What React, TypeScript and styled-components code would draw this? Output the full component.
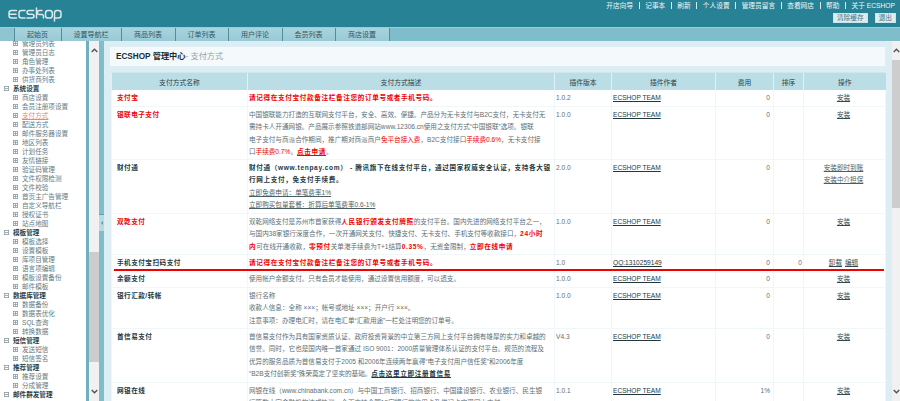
import { ReactNode } from "react";
import styled, { createGlobalStyle } from "styled-components";

const GlobalStyle = createGlobalStyle`
  html, body, #root {
    margin: 0;
    height: 100%;
    overflow: hidden;
  }
  body {
    font-family: "Liberation Sans", "Noto Sans CJK SC", sans-serif;
    font-size: 6.6px;
    color: #192e32;
  }
`;

const Page = styled.div`
  display: flex;
  flex-direction: column;
  height: 401px;
  overflow: hidden;
`;

const Header = styled.header`
  display: flex;
  justify-content: space-between;
  height: 27px;
  background: #278296;
  flex: none;
`;

const LogoWrap = styled.div`
  padding: 7px 0 0 8px;
`;

const HeaderRight = styled.div`
  display: flex;
  flex-direction: column;
  align-items: flex-end;
  padding: 0 4px 0 0;
`;

const TopNav = styled.nav`
  display: flex;
  align-items: center;
  height: 10px;
  margin-right: 1px;
  color: #eef8fa;
  font-size: 6.7px;
  white-space: nowrap;
`;

const TopLink = styled.span`
  & + &::before {
    content: "";
    display: inline-block;
    width: 1px;
    height: 7px;
    margin: 0 5.5px 0 5.6px;
    background: #d5e9ee;
    vertical-align: -1px;
  }
`;

const ButtonRow = styled.div`
  display: flex;
  gap: 7px;
  margin-top: 3px;
`;

const HeaderButton = styled.button`
  height: 10px;
  padding: 0 3px;
  border: 1px solid #cbe4ea;
  background: #dcecf1;
  color: #4a727c;
  font: 6.7px "Liberation Sans", "Noto Sans CJK SC", sans-serif;
  line-height: 8px;
`;

const TabBar = styled.div`
  display: flex;
  height: 14px;
  flex: none;
  background: #80bdcb;
  border-top: 1px solid #9bcbd6;
  box-sizing: border-box;
`;

const TabStub = styled.div`
  width: 15px;
  background: #8fc4d1;
  border-right: 1px solid #4f8f9d;
  box-sizing: border-box;
`;

const Tab = styled.div`
  padding: 0 12.5px 0 12px;
  background: linear-gradient(#a9d3dd, #98cad6);
  border-right: 1px solid #4f8f9d;
  color: #345660;
  font-size: 7px;
  line-height: 13px;
  white-space: nowrap;
`;

const Body = styled.div`
  display: flex;
  flex: 1;
  min-height: 0;
`;

const Sidebar = styled.aside`
  width: 86px;
  flex: none;
  overflow: hidden;
  background: #fff;
  border-right: 3px solid #6fb0bf;
`;

const MenuList = styled.ul`
  list-style: none;
  margin: -2.5px 0 0;
  padding: 0;
`;

const MenuRow = styled.li<{ $group?: boolean; $active?: boolean }>`
  display: flex;
  align-items: center;
  gap: 4px;
  height: 9px;
  padding-left: ${(p) => (p.$group ? "4px" : "13px")};
  font-size: 6.6px;
  white-space: nowrap;
  color: ${(p) => (p.$group ? "#2a4248" : p.$active ? "#f08a55" : "#5f7b83")};
  font-weight: ${(p) => (p.$group ? 700 : 400)};
  text-decoration: ${(p) => (p.$active ? "underline" : "none")};
`;

const ScrollTrack = styled.div<{ $width: number }>`
  display: flex;
  flex-direction: column;
  align-items: center;
  flex: none;
  width: ${(p) => p.$width}px;
  background: #f1f1f1;
`;

const ScrollButton = styled.div<{ $end?: boolean }>`
  display: flex;
  align-items: center;
  justify-content: center;
  flex: none;
  height: 19px;
  width: 100%;
  margin-top: ${(p) => (p.$end ? "auto" : "0")};
`;

const ScrollThumb = styled.div<{ $offset: number; $height: number }>`
  flex: none;
  width: 100%;
  margin-top: ${(p) => p.$offset}px;
  height: ${(p) => p.$height}px;
  background: #cdcdcd;
`;

const SplitBar = styled.div`
  flex: none;
  width: 5px;
  padding-top: 173px;
  background: #80bdcb;
`;

const SplitHandle = styled.div`
  display: flex;
  align-items: center;
  justify-content: center;
  height: 16px;
  background: #b8dae3;
  border-top: 1px solid #5ea2b2;

  &::before {
    content: "";
    border-style: solid;
    border-width: 2px 2px 2px 0;
    border-color: transparent #5a96a6 transparent transparent;
  }
`;

const Main = styled.main`
  flex: 1;
  min-width: 0;
  overflow: hidden;
  padding: 6px 7px 0 6px;
  background: #dcedf3;
`;

const TitleBox = styled.h1`
  margin: 0 0 6px;
  height: 19px;
  padding-left: 6px;
  background: #f4fafc;
  font-size: 8.2px;
  font-weight: 700;
  line-height: 19px;
  color: #192e32;
`;

const TitleSub = styled.span`
  font-weight: 400;
  color: #8fa4a9;
`;

const TableWrap = styled.div`
  margin-left: 1px;
  padding-top: 1px;
  background: #cfe6ec;
`;

const PayTable = styled.table`
  width: 774px;
  table-layout: fixed;
  border-collapse: collapse;
  background: #fff;
`;

const HeadCell = styled.th`
  height: 17px;
  padding: 0;
  background: #bbdde5;
  border-left: 1px solid #e2f1f5;
  color: #2b4248;
  font-size: 6.8px;
  font-weight: 400;
  text-align: center;
`;

const Row = styled.tr<{ $marked?: boolean; $height: number }>`
  position: relative;
  height: ${(p) => p.$height}px;

  ${(p) =>
    p.$marked &&
    `&::after {
      content: "";
      position: absolute;
      left: 2px;
      right: 2px;
      bottom: -1px;
      height: 2px;
      background: #f00000;
    }`}
`;

const Cell = styled.td<{ $align?: "left" | "right" | "center"; $padLeft?: number; $padRight?: number }>`
  padding: 2.3px ${(p) => p.$padRight ?? 3}px 0 ${(p) => p.$padLeft ?? 1}px;
  vertical-align: top;
  border: 1px solid #eff7f9;
  border-top: 0;
  line-height: 12.4px;
  white-space: nowrap;
  overflow: hidden;
  text-align: ${(p) => p.$align ?? "left"};
  color: #5c6f75;
`;

const MethodName = styled.span<{ $red?: boolean }>`
  font-weight: 700;
  letter-spacing: 0.5px;
  color: ${(p) => (p.$red ? "#f00000" : "#22383e")};
`;

const Red = styled.span`
  color: #f00000;
`;

const RedBold = styled.strong`
  letter-spacing: 0.65px;
  color: #f00000;
`;

const RedLink = styled(RedBold)`
  text-decoration: underline;
`;

const Strong = styled.strong`
  letter-spacing: 0.65px;
  color: #22383e;
`;

const Link = styled.span`
  color: #4a5f65;
  text-decoration: underline;
`;

const DarkLink = styled.span`
  color: #22383e;
  text-decoration: underline;
`;

const ActionLink = styled.span`
  color: #33494f;
  text-decoration: underline;
  & + & {
    margin-left: 3px;
  }
`;

function Logo() {
  return (
    <svg width="54" height="15" viewBox="0 0 54 15" fill="none" stroke="#dde8ea" strokeWidth="1.5" strokeLinecap="round" strokeLinejoin="round">
      <path d="M8.5 3.5H3.5Q1 3.5 1 6v2.5Q1 11 3.5 11h5M1.5 7.2h6.5" />
      <path d="M17 3.5h-3.5Q11 3.5 11 6v2.5q0 2.5 2.5 2.5H17" />
      <path d="M25.5 3.5H21q-2 0-2 1.8t2 1.9h3q2 0 2 1.9T24 11h-5" />
      <path d="M28.5 1v10M34 3.5h-2.5q-2 0-2 2v.5q0 1.4 1.6 1.4h3.4M31 7.4h3q1.5 0 1.5 1.8V11" />
      <rect x="37.5" y="3.5" width="6.8" height="7.5" rx="2.6" />
      <path d="M46.5 14V6q0-2.5 2.5-2.5h1.5q2.5 0 2.5 2.5v2.5q0 2.5-2.5 2.5h-4" />
    </svg>
  );
}

function TreeIcon({ open }: { open?: boolean }) {
  return (
    <svg width="5" height="5" viewBox="0 0 5 5" fill="none" stroke="#8a9ca1" strokeWidth="0.8" style={{ flex: "none" }}>
      <rect x="0.4" y="0.4" width="4.2" height="4.2" />
      <path d={open ? "M1 2.5h3" : "M1 2.5h3M2.5 1v3"} />
    </svg>
  );
}

function Chevron({ up }: { up?: boolean }) {
  return (
    <svg width="7" height="5" viewBox="0 0 7 5" fill="none" stroke="#505050" strokeWidth="1.3">
      <path d={up ? "M.7 4 3.5 1.2 6.3 4" : "M.7 1 3.5 3.8 6.3 1"} />
    </svg>
  );
}

const navItems = ["开店向导", "记事本", "刷新", "个人设置", "管理员留言", "查看网店", "帮助", "关于 ECSHOP"];
const tabs = ["起始页", "设置导航栏", "商品列表", "订单列表", "用户评论", "会员列表", "商店设置"];

const menu: { label: string; group?: boolean; active?: boolean }[] = [
  { label: "管理员列表" },
  { label: "管理员日志" },
  { label: "角色管理" },
  { label: "办事处列表" },
  { label: "供货商列表" },
  { label: "系统设置", group: true },
  { label: "商店设置" },
  { label: "会员注册项设置" },
  { label: "支付方式", active: true },
  { label: "配送方式" },
  { label: "邮件服务器设置" },
  { label: "地区列表" },
  { label: "计划任务" },
  { label: "友情链接" },
  { label: "验证码管理" },
  { label: "文件权限检测" },
  { label: "文件校验" },
  { label: "首页主广告管理" },
  { label: "自定义导航栏" },
  { label: "授权证书" },
  { label: "站点地图" },
  { label: "模板管理", group: true },
  { label: "模板选择" },
  { label: "设置模板" },
  { label: "库项目管理" },
  { label: "语言项编辑" },
  { label: "模板设置备份" },
  { label: "邮件模板" },
  { label: "数据库管理", group: true },
  { label: "数据备份" },
  { label: "数据表优化" },
  { label: "SQL查询" },
  { label: "转换数据" },
  { label: "短信管理", group: true },
  { label: "发送短信" },
  { label: "短信签名" },
  { label: "推荐管理", group: true },
  { label: "推荐设置" },
  { label: "分成管理" },
  { label: "邮件群发管理", group: true },
];

const columns: { title: string; width: number }[] = [
  { title: "支付方式名称", width: 136 },
  { title: "支付方式描述", width: 307 },
  { title: "插件版本", width: 57 },
  { title: "插件作者", width: 104 },
  { title: "费用", width: 58 },
  { title: "排序", width: 30 },
  { title: "操作", width: 82 },
];

const reminder = <RedBold>请记得在支付宝付款备注栏备注您的订单号或者手机号码。</RedBold>;

interface Payment {
  name: string;
  red?: boolean;
  desc: ReactNode;
  version: string;
  author: string;
  fee: string;
  order?: string;
  actions: string[];
  height: number;
  marked?: boolean;
}

const payments: Payment[] = [
  { name: "支付宝", red: true, desc: reminder, version: "1.0.2", author: "ECSHOP TEAM", fee: "0", actions: ["安装"], height: 16 },
  {
    name: "银联电子支付",
    red: true,
    desc: (
      <>
        中国银联能力打造的互联网支付平台，安全、高效、便捷。产品分为无卡支付与B2C支付，无卡支付无
        <br />
        需持卡人开通网银。产品展示参照铁道部网站www.12306.cn使用之支付方式“中国银联”选项。银联
        <br />
        电子支付与商派合作期间，推广期对商派商户<Red>免平台接入费</Red>，B2C支付接口<Red>手续费0.6%</Red>，无卡支付接
        <br />
        口<Red>手续费0.7%</Red>。<RedLink>点击申请</RedLink>。
      </>
    ),
    version: "1.0.0",
    author: "ECSHOP TEAM",
    fee: "0",
    actions: ["安装"],
    height: 53,
  },
  {
    name: "财付通",
    desc: (
      <>
        <Strong>
          财付通（www.tenpay.com） - 腾讯旗下在线支付平台，通过国家权威安全认证，支持各大银
          <br />
          行网上支付，免支付手续费。
        </Strong>
        <br />
        <Link>立即免费申请：单笔费率1%</Link>
        <br />
        <Link>立即购买包量套餐：折算后单笔费率0.6-1%</Link>
      </>
    ),
    version: "2.0.0",
    author: "ECSHOP TEAM",
    fee: "0",
    actions: ["安装即时到账", "安装中介担保"],
    height: 54,
  },
  {
    name: "双乾支付",
    red: true,
    desc: (
      <>
        双乾网络支付是苏州市首家获得<RedBold>人民银行颁发支付牌照</RedBold>的支付平台。国内先进的网络支付平台之一，
        <br />
        与国内38家银行深度合作，一次开通网关支付、快捷支付、无卡支付、手机支付等收款接口，<RedBold>24小时</RedBold>
        <br />
        <RedBold>内</RedBold>可在线开通收款，<RedBold>零预付</RedBold>关单港手续费为T+1结算<RedBold>0.35%</RedBold>，无资金限制，<RedBold>立即在线申请</RedBold>
      </>
    ),
    version: "1.0.0",
    author: "ECSHOP TEAM",
    fee: "0",
    actions: ["安装"],
    height: 41,
  },
  {
    name: "手机支付宝扫码支付",
    desc: reminder,
    version: "1.0",
    author: "QQ:1310259149",
    fee: "0",
    order: "0",
    actions: ["卸载", "编辑"],
    height: 16,
    marked: true,
  },
  {
    name: "余额支付",
    desc: "使用帐户余额支付。只有会员才能使用，通过设置信用额度，可以透支。",
    version: "1.0.0",
    author: "ECSHOP TEAM",
    fee: "0",
    actions: ["安装"],
    height: 17,
  },
  {
    name: "银行汇款/转帐",
    desc: (
      <>
        银行名称
        <br />
        收款人信息：全称 ×××；帐号或地址 ×××；开户行 ×××。
        <br />
        注意事项：办理电汇时，请在电汇单“汇款用途”一栏处注明您的订单号。
      </>
    ),
    version: "1.0.0",
    author: "ECSHOP TEAM",
    fee: "0",
    actions: ["安装"],
    height: 41,
  },
  {
    name: "首信易支付",
    desc: (
      <>
        首信易支付作为具有国家资质认证、政府投资背景的中立第三方网上支付平台拥有雄厚的实力和卓越的
        <br />
        信誉。同时，它也是国内唯一首家通过 ISO 9001：2000质量管理体系认证的支付平台。规范的流程及
        <br />
        优异的服务品质为首信易支付于2005 和2006年连续两年赢得“电子支付用户信任奖”和2006年度
        <br />
        “B2B支付创新奖”殊荣奠定了坚实的基础。
        <DarkLink>
          <Strong>点击这里立即注册首信易</Strong>
        </DarkLink>
      </>
    ),
    version: "V4.3",
    author: "ECSHOP TEAM",
    fee: "0",
    actions: ["安装"],
    height: 54,
  },
  {
    name: "网银在线",
    desc: (
      <>
        网银在线（www.chinabank.com.cn）与中国工商银行、招商银行、中国建设银行、农业银行、民生银
        <br />
        行等数十家金融机构达成协议。全面支持全国19家银行的信用卡及借记卡实现网上支付。
      </>
    ),
    version: "1.0.1",
    author: "ECSHOP TEAM",
    fee: "1%",
    actions: ["安装"],
    height: 41,
  },
];

export default function App() {
  return (
    <Page>
      <GlobalStyle />
      <Header>
        <LogoWrap>
          <Logo />
        </LogoWrap>
        <HeaderRight>
          <TopNav>
            {navItems.map((item) => (
              <TopLink key={item}>{item}</TopLink>
            ))}
          </TopNav>
          <ButtonRow>
            <HeaderButton>清除缓存</HeaderButton>
            <HeaderButton>退出</HeaderButton>
          </ButtonRow>
        </HeaderRight>
      </Header>
      <TabBar>
        <TabStub />
        {tabs.map((tab) => (
          <Tab key={tab}>{tab}</Tab>
        ))}
      </TabBar>
      <Body>
        <Sidebar>
          <MenuList>
            {menu.map((item) => (
              <MenuRow key={item.label} $group={item.group} $active={item.active}>
                <TreeIcon open={item.group} />
                {item.label}
              </MenuRow>
            ))}
          </MenuList>
        </Sidebar>
        <ScrollTrack $width={10}>
          <ScrollButton>
            <Chevron up />
          </ScrollButton>
          <ScrollThumb $offset={192} $height={110} />
          <ScrollButton $end>
            <Chevron />
          </ScrollButton>
        </ScrollTrack>
        <SplitBar>
          <SplitHandle />
        </SplitBar>
        <Main>
          <TitleBox>
            ECSHOP 管理中心<TitleSub>- 支付方式</TitleSub>
          </TitleBox>
          <TableWrap>
            <PayTable>
              <colgroup>
                {columns.map((col) => (
                  <col key={col.title} style={{ width: col.width }} />
                ))}
              </colgroup>
              <thead>
                <tr>
                  {columns.map((col) => (
                    <HeadCell key={col.title}>{col.title}</HeadCell>
                  ))}
                </tr>
              </thead>
              <tbody>
                {payments.map((pay) => (
                  <Row key={pay.name} $height={pay.height} $marked={pay.marked}>
                    <Cell $padLeft={5}>
                      <MethodName $red={pay.red}>{pay.name}</MethodName>
                    </Cell>
                    <Cell>{pay.desc}</Cell>
                    <Cell>{pay.version}</Cell>
                    <Cell>
                      <DarkLink>{pay.author}</DarkLink>
                    </Cell>
                    <Cell $align="right">{pay.fee}</Cell>
                    <Cell $align="right" $padRight={1}>
                      {pay.order}
                    </Cell>
                    <Cell $align="center">
                      {pay.actions.length > 1 && pay.actions[0].length > 2
                        ? pay.actions.map((action) => (
                            <div key={action}>
                              <Link>{action}</Link>
                            </div>
                          ))
                        : pay.actions.map((action) => <ActionLink key={action}>{action}</ActionLink>)}
                    </Cell>
                  </Row>
                ))}
              </tbody>
            </PayTable>
          </TableWrap>
        </Main>
        <ScrollTrack $width={8}>
          <ScrollButton>
            <Chevron up />
          </ScrollButton>
          <ScrollThumb $offset={0} $height={148} />
          <ScrollButton $end>
            <Chevron />
          </ScrollButton>
        </ScrollTrack>
      </Body>
    </Page>
  );
}
